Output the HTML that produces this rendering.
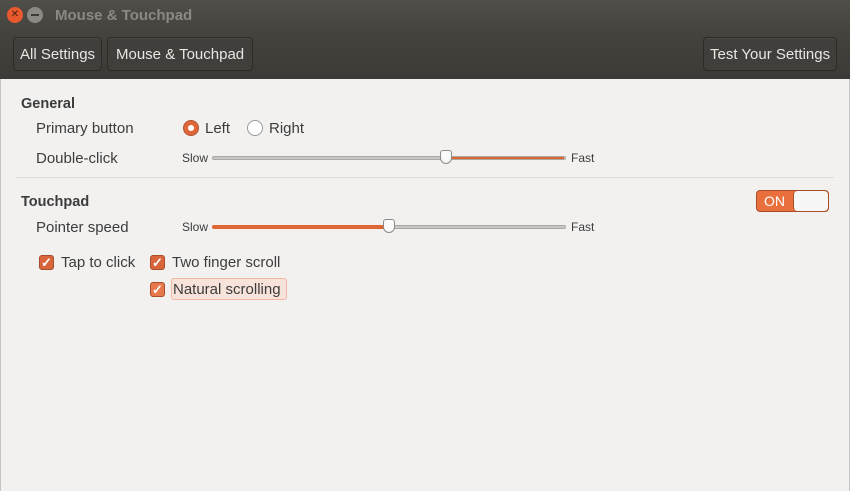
<!DOCTYPE html>
<html><head><style>
*{margin:0;padding:0;box-sizing:border-box}
body{width:850px;height:491px;overflow:hidden;background:#f2f1f0;font-family:"Liberation Sans",sans-serif;font-size:15px;color:#3c3c3c;position:relative}
.title{position:absolute;left:0;top:0;width:850px;height:29px;background:linear-gradient(#504e48,#45443f);}
.tb{position:absolute;left:0;top:29px;width:850px;height:50px;background:linear-gradient(#45443f,#3b3a36)}
.btn{position:absolute;top:37px;height:34px;border:1px solid #2c2b28;border-radius:4px;background:#403f3b;color:#e8e6e2;font-size:15px;line-height:33px;padding:0 6px;box-shadow:inset 0 1px 0 rgba(255,255,255,.06)}
.a{position:absolute;white-space:nowrap}
.b{font-weight:bold;font-size:14.5px}
.track{position:absolute;height:4px;border-radius:2px;background:#c9c7c4;border:1px solid #aaa8a5}
.or{position:absolute;height:3px;background:#e06634}
.thumb{position:absolute;width:12px;height:14px;background:#fafafa;border:1px solid #8d8b87;border-radius:3px 3px 6px 6px}
.cb{position:absolute;width:15px;height:15px;border-radius:3px;background:#d9663a;border:1px solid #a84d29;color:#fff;font-size:13px;line-height:13px;text-align:center;font-weight:bold}
.small{font-size:12px}
</style></head><body>
<div class="title"></div>
<div class="a" style="left:7px;top:7px;width:16px;height:16px;border-radius:50%;background:#e9592e;color:#4a2010;font-size:10px;line-height:16px;text-align:center">✕</div>
<div class="a" style="left:27px;top:7px;width:16px;height:16px;border-radius:50%;background:#8a8984"><div style="position:absolute;left:4px;top:7px;width:8px;height:2px;background:#3c3b37"></div></div>
<div class="a" style="left:55px;top:7px;color:#8a8984;font-size:15px;font-weight:bold">Mouse &amp; Touchpad</div>
<div class="tb"></div>
<div class="btn" style="left:13px">All Settings</div>
<div class="btn" style="left:107px;padding:0 8px">Mouse &amp; Touchpad</div>
<div class="btn" style="left:703px">Test Your Settings</div>
<div class="a" style="left:0;top:79px;width:1px;height:412px;background:#c8c6c2"></div>
<div class="a" style="left:849px;top:79px;width:1px;height:412px;background:#c8c6c2"></div>

<div class="a b" style="left:21px;top:96px">General</div>
<div class="a" style="left:36px;top:120px">Primary button</div>
<div class="a" style="left:183px;top:120px;width:16px;height:16px;border-radius:50%;background:#e0673a;border:1px solid #b0532e"><div style="position:absolute;left:4px;top:4px;width:6px;height:6px;border-radius:50%;background:#fff"></div></div>
<div class="a" style="left:205px;top:120px">Left</div>
<div class="a" style="left:247px;top:120px;width:16px;height:16px;border-radius:50%;background:#fff;border:1px solid #999"></div>
<div class="a" style="left:269px;top:120px">Right</div>
<div class="a" style="left:36px;top:150px">Double-click</div>
<div class="a small" style="left:182px;top:151px">Slow</div>
<div class="track" style="left:212px;top:156px;width:354px"></div>
<div class="or" style="left:446px;top:157px;width:118px;height:2px"></div>
<div class="thumb" style="left:440px;top:150px"></div>
<div class="a small" style="left:571px;top:151px">Fast</div>
<div class="a" style="left:16px;top:177px;width:818px;height:1px;background:#dcdad6"></div>

<div class="a b" style="left:21px;top:194px">Touchpad</div>
<div class="a" style="left:756px;top:190px;width:73px;height:22px;border-radius:4px;background:#e9703c;border:1px solid #a84d29"><span style="position:absolute;left:7px;top:2px;color:#fff;font-size:14px">ON</span><div style="position:absolute;left:36px;top:0;width:35px;height:20px;background:#f7f7f7;border-radius:4px;border-left:1px solid #a84d29"></div></div>
<div class="a" style="left:36px;top:219px">Pointer speed</div>
<div class="a small" style="left:182px;top:220px">Slow</div>
<div class="track" style="left:212px;top:225px;width:354px"></div>
<div class="or" style="left:212px;top:225px;width:176px;height:4px;border-radius:2px"></div>
<div class="thumb" style="left:383px;top:219px"></div>
<div class="a small" style="left:571px;top:220px">Fast</div>

<div class="cb" style="left:39px;top:255px">✓</div>
<div class="a" style="left:61px;top:254px">Tap to click</div>
<div class="cb" style="left:150px;top:255px">✓</div>
<div class="a" style="left:172px;top:254px">Two finger scroll</div>
<div class="cb" style="left:150px;top:282px;background:#e8794c">✓</div>
<div class="a" style="left:171px;top:278px;width:116px;height:22px;border:1px solid #f0b8a0;border-radius:3px;background:#f8e3da"></div>
<div class="a" style="left:173px;top:281px">Natural scrolling</div>
</body></html>
